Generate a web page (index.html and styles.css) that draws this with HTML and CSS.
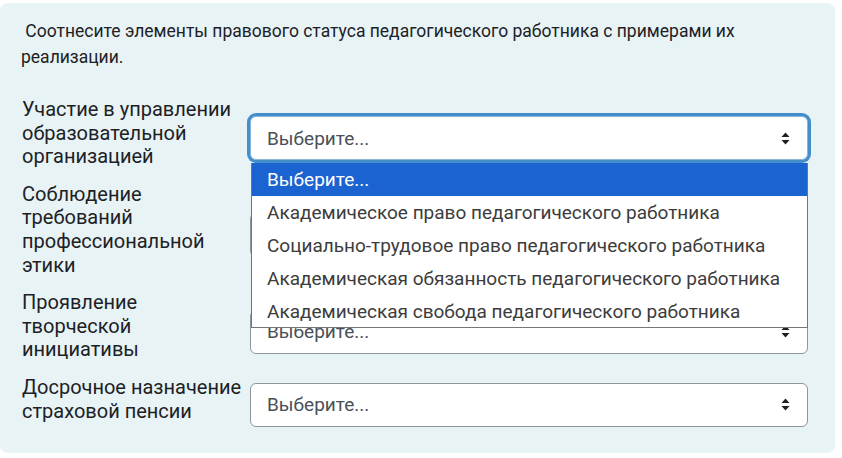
FILE: index.html
```html
<!DOCTYPE html>
<html lang="ru">
<head>
    <meta charset="UTF-8">
    <meta name="viewport" content="width=device-width, initial-scale=1.0">
    <title>Соотнесите элементы</title>
    <link rel="stylesheet" href="styles.css">
</head>
<body>

    <div class="que">
        <div class="qtext">&nbsp;Соотнесите элементы правового статуса педагогического работника с примерами их реализации.</div>

        <div class="answers">
            <div class="row">
                <div class="lbl">Участие в управлении образовательной организацией</div>
                <div class="sel focused">
                    <span>Выберите...</span>
                    <svg class="caret" width="9" height="13" viewBox="0 0 9 13"><path d="M4.5 0.5 L8.5 5 H0.5 Z M4.5 12.5 L8.5 8 H0.5 Z" fill="#1d2125"/></svg>

                    <!-- открытый список -->
                    <div class="dropdown">
                        <div class="opt active">Выберите...</div>
                        <div class="opt">Академическое право педагогического работника</div>
                        <div class="opt">Социально-трудовое право педагогического работника</div>
                        <div class="opt">Академическая обязанность педагогического работника</div>
                        <div class="opt">Академическая свобода педагогического работника</div>
                    </div>
                </div>
            </div>

            <div class="row">
                <div class="lbl">Соблюдение требований профессиональной этики</div>
                <div class="sel">
                    <span>Выберите...</span>
                    <svg class="caret" width="9" height="13" viewBox="0 0 9 13"><path d="M4.5 0.5 L8.5 5 H0.5 Z M4.5 12.5 L8.5 8 H0.5 Z" fill="#1d2125"/></svg>
                </div>
            </div>

            <div class="row">
                <div class="lbl">Проявление творческой инициативы</div>
                <div class="sel">
                    <span>Выберите...</span>
                    <svg class="caret" width="9" height="13" viewBox="0 0 9 13"><path d="M4.5 0.5 L8.5 5 H0.5 Z M4.5 12.5 L8.5 8 H0.5 Z" fill="#1d2125"/></svg>
                </div>
            </div>

            <div class="row">
                <div class="lbl">Досрочное назначение страховой пенсии</div>
                <div class="sel">
                    <span>Выберите...</span>
                    <svg class="caret" width="9" height="13" viewBox="0 0 9 13"><path d="M4.5 0.5 L8.5 5 H0.5 Z M4.5 12.5 L8.5 8 H0.5 Z" fill="#1d2125"/></svg>
                </div>
            </div>
        </div>
    </div>

</body>
</html>
```

FILE: styles.css
```css
body {
    margin: 0;
    background: #ffffff;
    font-family: Roboto, "Liberation Sans", sans-serif;
    color: #1d2125;
}

.que {
    background-color: #e7f3f5;
    border-radius: 8px;
    margin: 3px 7px 0 0;
    height: 450px;
    box-sizing: border-box;
    padding: 15px 20px 0 21px;
}

.qtext {
    font-size: 17.5px;
    line-height: 26px;
    margin-bottom: 28px;
}

.answers {
    display: flex;
    flex-direction: column;
    gap: 14px;
}

.row {
    display: flex;
    align-items: center;
}

.lbl {
    width: 224px;
    flex-shrink: 0;
    padding-left: 1px;
    margin-right: 4px;
    font-size: 20px;
    line-height: 23.6px;
}

/* поле выбора, чуть ниже центра строки */
.sel {
    position: relative;
    width: 558px;
    height: 44px;
    box-sizing: border-box;
    margin: 5px 0 -5px 0;
    border: 1px solid #8f959e;
    border-radius: 6px;
    background: #ffffff;
    display: flex;
    align-items: center;
    justify-content: space-between;
    padding: 0 17px 0 16px;
    font-size: 19px;
    color: #495057;
}

.sel.focused {
    border-color: #8bb4dc;
    box-shadow: 0 0 0 3px #458ecc;
}

.caret {
    display: block;
}

.dropdown {
    position: absolute;
    top: calc(100% + 4px);
    left: 0;
    right: -1px;
    background: #ffffff;
    border: 1px solid #767676;
    border-top: none;
    z-index: 5;
    color: #3c3c3c;
}

.opt {
    height: 32.8px;
    line-height: 33.8px;
    padding-left: 15px;
    font-size: 19px;
    white-space: nowrap;
}

.opt.active {
    background-color: #1b63d0;
    color: #ffffff;
}
```
